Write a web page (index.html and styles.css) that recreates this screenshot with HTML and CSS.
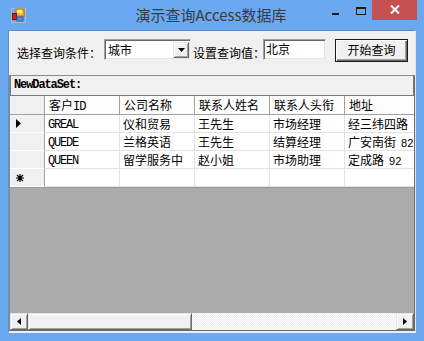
FILE: index.html
```html
<!DOCTYPE html>
<html>
<head>
<meta charset="utf-8">
<link rel="stylesheet" href="styles.css">
</head>
<body>
<div class="window">
  <div class="titlebar">
    <div class="app-icon">
      <svg width="15" height="15" viewBox="0 0 15 15">
        <rect x="0.5" y="0.5" width="14" height="14" fill="none" stroke="#b8b8b8"/>
        <rect x="5" y="1" width="8" height="7" fill="#f4c22b" stroke="#b07a10"/>
        <rect x="6" y="2" width="5" height="3" fill="#fde88a"/>
        <rect x="1.5" y="5.5" width="4" height="6" fill="#d02020" stroke="#801010"/>
        <rect x="6" y="9" width="6" height="4" fill="#5a8be0" stroke="#3060b0"/>
      </svg>
    </div>
    <div class="title">演示查询Access数据库</div>
    <div class="controls">
      <div class="btn-min"><span class="min-bar"></span></div>
      <div class="btn-max"><span class="max-box"></span></div>
      <div class="btn-close">
        <svg width="10" height="9" viewBox="0 0 10 9"><path d="M1 0.5 L9 8.5 M9 0.5 L1 8.5" stroke="#fff" stroke-width="2"/></svg>
      </div>
    </div>
  </div>
  <div class="client">
    <div class="toolbar">
      <span class="label label-1">选择查询条件：</span>
      <div class="combo">
        <span class="combo-text">城市</span>
        <span class="combo-btn">
          <svg width="7" height="4" viewBox="0 0 7 4"><path d="M0 0 H7 L3.5 4 Z" fill="#000"/></svg>
        </span>
      </div>
      <span class="label label-2">设置查询值：</span>
      <div class="textbox">北京</div>
      <div class="button">开始查询</div>
    </div>
    <div class="datagrid">
      <div class="caption">NewDataSet:</div>
      <div class="table">
        <div class="rh corner"></div>
        <div class="ch">客户<span class="hmono">ID</span></div>
        <div class="ch">公司名称</div>
        <div class="ch">联系人姓名</div>
        <div class="ch">联系人头衔</div>
        <div class="ch last">地址</div>

        <div class="rh"><svg width="5" height="9" viewBox="0 0 5 9"><path d="M0 0 L5 4.5 L0 9 Z" fill="#000"/></svg></div>
        <div class="cell mono">GREAL</div>
        <div class="cell">仪和贸易</div>
        <div class="cell">王先生</div>
        <div class="cell">市场经理</div>
        <div class="cell last">经三纬四路</div>

        <div class="rh"></div>
        <div class="cell mono">QUEDE</div>
        <div class="cell">兰格英语</div>
        <div class="cell">王先生</div>
        <div class="cell">结算经理</div>
        <div class="cell last">广安南街<span class="num">82</span></div>

        <div class="rh"></div>
        <div class="cell mono">QUEEN</div>
        <div class="cell">留学服务中</div>
        <div class="cell">赵小姐</div>
        <div class="cell">市场助理</div>
        <div class="cell last">定成路<span class="num">92</span></div>

        <div class="rh"><svg width="8" height="8" viewBox="0 0 8 8"><path d="M4 0 V8 M0 4 H8 M1 1 L7 7 M7 1 L1 7" stroke="#000" stroke-width="1.2"/></svg></div>
        <div class="cell"></div>
        <div class="cell"></div>
        <div class="cell"></div>
        <div class="cell"></div>
        <div class="cell last"></div>
      </div>
      <div class="empty"></div>
      <div class="hscroll">
        <div class="sbtn">
          <svg width="4" height="7" viewBox="0 0 4 7"><path d="M4 0 L0 3.5 L4 7 Z" fill="#000"/></svg>
        </div>
        <div class="thumb"></div>
        <div class="track"></div>
        <div class="sbtn">
          <svg width="4" height="7" viewBox="0 0 4 7"><path d="M0 0 L4 3.5 L0 7 Z" fill="#000"/></svg>
        </div>
      </div>
    </div>
  </div>
</div>
</body>
</html>
```

FILE: styles.css
```css
* { box-sizing: border-box; }
html, body { margin: 0; padding: 0; }
body {
  width: 424px;
  height: 341px;
  overflow: hidden;
  font-family: "Noto Sans CJK SC", "Noto Sans", sans-serif;
  font-size: 12px;
  color: #000;
}
.window {
  width: 424px;
  height: 341px;
  background: #6aa8f0;
  display: flex;
  flex-direction: column;
}
.titlebar {
  height: 30px;
  display: grid;
  grid-template-columns: 110px 1fr 110px;
  align-items: start;
}
.app-icon {
  padding: 8px 0 0 11px;
  height: 30px;
}
.app-icon svg { display: block; }
.title {
  text-align: center;
  font-size: 15px;
  line-height: 30px;
  color: #3a3a3a;
  white-space: nowrap;
  padding-right: 2px;
}
.controls {
  display: flex;
  justify-content: flex-end;
  padding-right: 7px;
}
.btn-min {
  width: 26px;
  height: 20px;
  padding: 13px 0 0 2px;
}
.min-bar {
  display: block;
  width: 7px;
  height: 2px;
  background: #1a1a1a;
}
.btn-max {
  width: 16px;
  height: 20px;
  padding: 7px 0 0 0;
}
.max-box {
  display: block;
  width: 10px;
  height: 8px;
  border: 1px solid #1a1a1a;
  border-top-width: 2px;
}
.btn-close {
  width: 45px;
  height: 20px;
  background: #c75050;
  display: flex;
  align-items: center;
  justify-content: center;
  padding-bottom: 1px;
}
.btn-close svg { display: block; }
.client {
  margin: 0 8px;
  height: 303px;
  background: #f0f0f0;
  border: 1px solid #5f8fc8;
  border-bottom-color: #e8eef6;
  border-right-color: #dfe8f2;
  display: flex;
  flex-direction: column;
}
.toolbar {
  height: 44px;
  display: flex;
  align-items: flex-start;
  padding-top: 8px;
}
.label {
  line-height: 16px;
  margin-top: 6px;
  white-space: nowrap;
}
.label-1 { margin-left: 8px; width: 87px; }
.label-2 { margin-left: 2px; width: 70px; }
.combo {
  width: 87px;
  height: 21px;
  background: #fff;
  border: 1px solid;
  border-color: #a0a0a0 #f0f0f0 #f0f0f0 #a0a0a0;
  box-shadow: inset 1px 1px 0 #696969, inset -1px -1px 0 #e3e3e3;
  display: flex;
  align-items: center;
  padding: 1px 1px 1px 3px;
  justify-content: space-between;
}
.combo-text { line-height: 16px; }
.combo-btn {
  width: 16px;
  height: 16px;
  background: #f0f0f0;
  border: 1px solid;
  border-color: #e3e3e3 #696969 #696969 #e3e3e3;
  box-shadow: inset 1px 1px 0 #fff, inset -1px -1px 0 #a0a0a0;
  display: flex;
  align-items: center;
  justify-content: center;
}
.combo-btn svg { display: block; }
.textbox {
  width: 63px;
  height: 21px;
  background: #fff;
  border: 1px solid;
  border-color: #a0a0a0 #f0f0f0 #f0f0f0 #a0a0a0;
  box-shadow: inset 1px 1px 0 #696969, inset -1px -1px 0 #e3e3e3;
  padding: 1px 2px;
  line-height: 16px;
}
.button {
  margin-left: 9px;
  width: 73px;
  height: 23px;
  background: #f0f0f0;
  border: 1px solid #1a1a1a;
  box-shadow: inset 1px 1px 0 #fff, inset -1px -1px 0 #696969, inset -2px -2px 0 #a0a0a0;
  text-align: center;
  line-height: 20px;
}
.datagrid {
  flex: 1;
  display: flex;
  flex-direction: column;
  border: 1px solid #8a8a8a;
  border-right-color: #696969;
  border-bottom: 0;
  margin-bottom: 1px;
}
.caption {
  height: 20px;
  background: #f0f0f0;
  border: 1px solid #7a7a7a;
  border-top: 0;
  font-family: "Liberation Mono", "DejaVu Sans Mono", monospace;
  font-weight: bold;
  font-size: 12px;
  line-height: 18px;
  padding-left: 3px;
  letter-spacing: -1.1px;
  color: #000;
}
.table {
  display: grid;
  grid-template-columns: 35px 75px 75px 75px 75px 1fr;
  grid-template-rows: 19px 18px 18px 18px 18px;
  background: #fff;
}
.rh {
  background: #f0f0f0;
  border-right: 1px solid #a0a0a0;
  border-bottom: 1px solid #fff;
  display: flex;
  align-items: center;
  padding-left: 6px;
}
.rh.corner {
  border-bottom: 1px solid #a0a0a0;
}
.ch {
  background: #fcfcfc;
  border-right: 1px solid #a0a0a0;
  border-bottom: 1px solid #a0a0a0;
  box-shadow: inset 1px 0 0 #fff;
  padding-left: 4px;
  line-height: 18px;
  white-space: nowrap;
  overflow: hidden;
}
.cell {
  background: #fff;
  border-right: 1px solid #e2e2e2;
  border-bottom: 1px solid #e2e2e2;
  padding-left: 3px;
  line-height: 17px;
  white-space: nowrap;
  overflow: hidden;
}
.last { border-right: 0; }
.cell.mono {
  font-family: "Liberation Mono", "DejaVu Sans Mono", monospace;
  font-size: 12px;
  letter-spacing: -1.2px;
  padding-top: 4px;
  line-height: 13px;
}
.hmono {
  font-family: "Liberation Mono", "DejaVu Sans Mono", monospace;
  font-size: 12px;
  letter-spacing: -1px;
}
.num {
  font-family: "Liberation Sans", sans-serif;
  font-size: 11px;
  margin-left: 5px;
}
.empty {
  flex: 1;
  background: #ababab;
  border-top: 1px solid #9a9a9a;
}
.hscroll {
  height: 18px;
  display: flex;
  border-bottom: 1px solid #696969;
}
.sbtn {
  width: 18px;
  height: 17px;
  background: #f0f0f0;
  border: 1px solid;
  border-color: #e3e3e3 #696969 #696969 #e3e3e3;
  box-shadow: inset 1px 1px 0 #fff, inset -1px -1px 0 #a0a0a0;
  display: flex;
  align-items: center;
  justify-content: center;
}
.sbtn svg { display: block; }
.thumb {
  width: 164px;
  height: 17px;
  background: #f0f0f0;
  border: 1px solid;
  border-color: #e3e3e3 #696969 #696969 #e3e3e3;
  box-shadow: inset 1px 1px 0 #fff, inset -1px -1px 0 #a0a0a0;
}
.track {
  flex: 1;
  height: 17px;
  background: repeating-conic-gradient(#ffffff 0 25%, #ececec 0 50%) 0 0 / 2px 2px;
}
```
